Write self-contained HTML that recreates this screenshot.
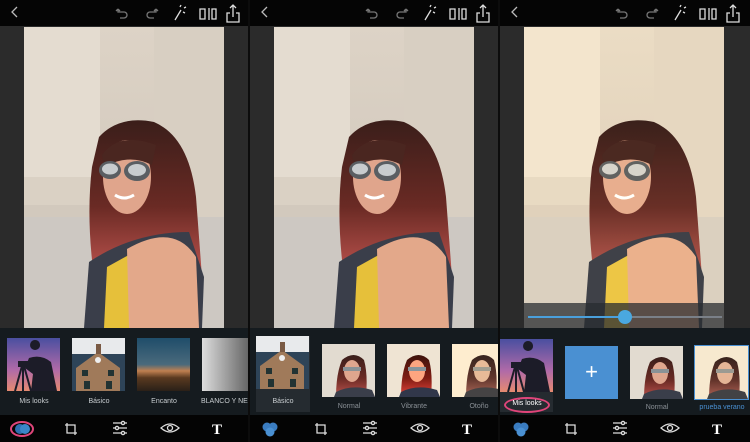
<!DOCTYPE html>
<html><head><meta charset="utf-8"><style>
body{margin:0;width:750px;height:442px;background:#0c0c0c;overflow:hidden;position:relative;font-family:"Liberation Sans",sans-serif}
.p{position:absolute;top:0;width:248px;height:442px;background:#2b2b2b;overflow:hidden}
.top{position:absolute;left:0;top:0;width:100%;height:26px;background:#050505}
.strip{position:absolute;left:0;top:328px;width:100%;height:87px;background:#151b1f}
.tb{position:absolute;left:0;top:415px;width:100%;height:27px;background:#040404}
.ph{position:absolute;left:24px;top:27px;width:200px;height:301px}
.th{position:absolute;width:53px;height:53px;overflow:hidden}
.lb{position:absolute;font-size:7px;color:#c8cdd0;text-align:center;width:60px}
svg{display:block}
</style></head><body>
<svg width="0" height="0" style="position:absolute">
<defs>
<linearGradient id="bg" x1="0" y1="0" x2="0" y2="1"><stop offset="0" stop-color="#ddd3c6"/><stop offset=".6" stop-color="#d2c9bd"/><stop offset="1" stop-color="#cfc8c0"/></linearGradient>
<linearGradient id="hair" x1="0" y1="0" x2="0" y2="1"><stop offset="0" stop-color="#3a1e1a"/><stop offset=".55" stop-color="#6a2a24"/><stop offset="1" stop-color="#c05550"/></linearGradient>
<symbol id="photo" viewBox="0 0 200 301">
<rect width="200" height="301" fill="url(#bg)"/>
<rect x="0" y="0" width="76" height="178" fill="#e4dcd0"/>
<rect x="0" y="150" width="76" height="28" fill="#dad1c4"/>
<rect x="130" y="0" width="70" height="230" fill="#d8cfc2"/>
<rect x="0" y="190" width="200" height="111" fill="#cdc8c2"/>
<path d="M75 110 Q95 88 130 95 Q165 110 172 170 L178 250 L70 250 Q62 190 68 140 Z" fill="url(#hair)"/>
<path d="M65 235 Q110 205 165 205 L180 250 L178 301 L60 301 Z" fill="#3a3e4a"/>
<path d="M83 240 L110 225 L113 301 L80 301 Z" fill="#e6c03a"/>
<path d="M103 222 Q150 195 172 230 L175 301 L105 301 Z" fill="#e3a88a"/>
<ellipse cx="103" cy="150" rx="24" ry="37" fill="#e0a58c"/>
<path d="M78 128 Q95 104 132 118 L128 138 Q105 126 80 140 Z" fill="#4a2620"/>
<ellipse cx="86" cy="143" rx="11" ry="9" fill="#5a5e62"/>
<ellipse cx="113" cy="144" rx="13" ry="10" fill="#5a5e62"/>
<ellipse cx="86" cy="142" rx="8" ry="5.5" fill="#c8ccce"/>
<ellipse cx="113" cy="143" rx="9" ry="6" fill="#c8ccce"/>
<path d="M91 168 Q100 174 110 168" stroke="#fff" stroke-width="3" fill="none"/>
</symbol>
<symbol id="mis" viewBox="0 0 53 53">
<linearGradient id="sky" x1="0" y1="0" x2="0" y2="1"><stop offset="0" stop-color="#4a4fa0"/><stop offset=".6" stop-color="#b06aa8"/><stop offset="1" stop-color="#e68a70"/></linearGradient>
<rect width="53" height="53" fill="url(#sky)"/>
<path d="M28 12 a5 5 0 1 1 0.1 0 M22 20 Q34 16 44 24 L50 53 L24 53 L26 36 L18 30 Z" fill="#1c1c28"/>
<path d="M12 24 h8 v4 h-8z M15 28 L8 53 M16 28 L16 53 M17 28 L24 53" stroke="#1c1c28" stroke-width="2" fill="#1c1c28"/>
</symbol>
<symbol id="house" viewBox="0 0 53 53">
<rect width="53" height="53" fill="#e8eaec"/>
<rect y="16" width="53" height="37" fill="#2e4458"/>
<path d="M4 53 V30 L26 14 L48 30 V53 Z" fill="#a07a5a"/>
<rect x="24" y="6" width="5" height="10" fill="#7a5a44"/>
<circle cx="26" cy="22" r="3" fill="#eee"/>
<rect x="10" y="32" width="6" height="6" fill="#233"/><rect x="36" y="32" width="6" height="6" fill="#233"/>
<rect x="12" y="43" width="6" height="8" fill="#233"/><rect x="34" y="43" width="6" height="8" fill="#233"/>
</symbol>
<symbol id="wthumb" viewBox="0 0 53 53">
<rect width="53" height="53" fill="#e2dbd0"/>
<path d="M20 16 Q32 6 42 16 Q46 30 44 53 L14 53 Q14 30 20 16Z" fill="url(#hair)"/>
<ellipse cx="30" cy="27" rx="8" ry="11" fill="#dfa68e"/>
<rect x="21" y="23" width="18" height="4" fill="#8a9296"/>
<path d="M14 48 Q30 40 50 46 L53 53 L12 53Z" fill="#3a3e4a"/>
</symbol>
</defs></svg>

<!-- PANEL 1 -->
<div class="p" style="left:0">
<div class="top"></div>
<div class="ph"><svg width="200" height="301"><use href="#photo"/></svg></div>
<div class="strip"></div>
<div class="th" style="left:7px;top:338px"><svg width="53" height="53"><use href="#mis"/></svg></div>
<div class="th" style="left:72px;top:338px"><svg width="53" height="53"><use href="#house"/></svg></div>
<div class="th" style="left:137px;top:338px;background:linear-gradient(#1f4d6a,#4a6a7c 50%,#c08050 62%,#5a3a20 75%,#2a2018)"></div>
<div class="th" style="left:202px;top:338px;background:linear-gradient(90deg,#ddd,#999 50%,#555)"></div>
<div class="lb" style="left:4px;top:398px">Mis looks</div>
<div class="lb" style="left:69px;top:398px">Básico</div>
<div class="lb" style="left:134px;top:398px">Encanto</div>
<div class="lb" style="left:201px;top:398px;text-align:left;white-space:nowrap">BLANCO Y NEGR</div>
<div class="tb"></div>
</div>
<!-- PANEL 2 -->
<div class="p" style="left:250px">
<div class="top"></div>
<div class="ph"><svg width="200" height="301"><use href="#photo"/></svg></div>
<div class="strip"></div>
<div style="position:absolute;left:6px;top:336px;width:54px;height:76px;background:#252b30"></div>
<div class="th" style="left:6px;top:336px"><svg width="53" height="53"><use href="#house"/></svg></div>
<div class="th" style="left:72px;top:344px"><svg width="53" height="53"><use href="#wthumb"/></svg></div>
<div class="th" style="left:137px;top:344px;filter:saturate(1.4) contrast(1.1)"><svg width="53" height="53"><use href="#wthumb"/></svg></div>
<div class="th" style="left:202px;top:344px;filter:sepia(.4)"><svg width="53" height="53"><use href="#wthumb"/></svg></div>
<div class="lb" style="left:3px;top:398px">Básico</div>
<div class="lb" style="left:69px;top:403px;color:#8a9096">Normal</div>
<div class="lb" style="left:134px;top:403px;color:#8a9096">Vibrante</div>
<div class="lb" style="left:199px;top:403px;color:#8a9096">Otoño</div>
<div class="tb"></div>
</div>
<!-- PANEL 3 -->
<div class="p" style="left:500px;width:250px">
<div class="top"></div>
<div class="ph" style="filter:sepia(.2) saturate(1.1)"><svg width="200" height="301"><use href="#photo"/></svg></div>
<div style="position:absolute;left:24px;top:303px;width:200px;height:25px;background:rgba(40,44,48,.75)"></div>
<div style="position:absolute;left:28px;top:316px;width:194px;height:2px;background:#7a8088"></div>
<div style="position:absolute;left:28px;top:316px;width:97px;height:2px;background:#4aa0dc"></div>
<div style="position:absolute;left:118px;top:310px;width:14px;height:14px;border-radius:50%;background:#4aa8e0"></div>
<div class="strip"></div>
<div style="position:absolute;left:0;top:339px;width:53px;height:73px;background:#252b30"></div>
<div class="th" style="left:0;top:339px"><svg width="53" height="53"><use href="#mis"/></svg></div>
<div class="th" style="left:65px;top:346px;background:#4a90d2;color:#fff;font-size:22px;text-align:center;line-height:51px">+</div>
<div class="th" style="left:130px;top:346px"><svg width="53" height="53"><use href="#wthumb"/></svg></div>
<div style="position:absolute;left:194px;top:345px;width:53px;height:53px;border:1px solid #4a90d2"></div>
<div class="th" style="left:195px;top:346px;filter:sepia(.3)"><svg width="53" height="53"><use href="#wthumb"/></svg></div>
<div style="position:absolute;left:4px;top:397px;width:42px;height:12px;border:2px solid #e0457a;border-radius:50%"></div>
<div class="lb" style="left:-3px;top:400px;color:#fff">Mis looks</div>
<div class="lb" style="left:127px;top:404px;color:#8a9096">Normal</div>
<div class="lb" style="left:192px;top:404px;color:#4a90d2">prueba verano</div>
<div class="tb"></div>
</div>

<!-- icons -->
<svg style="position:absolute;left:0;top:0" width="750" height="442">
<g stroke="#bbb" stroke-width="1.3" fill="none">
<g id="ticons">
<path d="M17 7 L12 12 L17 17"/>
<path d="M118 9 v3 h6 a3 3 0 0 1 0 6 h-4 M118 9 l-2 2 M118 9 l2 2" stroke="#777"/>
<path d="M156 9 v3 h-6 a3 3 0 0 0 0 6 h4 M156 9 l-2 2 M156 9 l2 2" stroke="#777"/>
<path d="M175 20 l6 -10 M180 7 l1 -2 M184 8 l2 -1 M183 12 l2 1" stroke="#ddd"/>
<path d="M200 9 h5 v10 h-5z M209 8 v12 M212 9 h4 v10 h-4z" stroke="#ddd"/>
<path d="M230 13 h-3 v9 h12 v-9 h-3 M233 17 V5 M230 8 l3 -3 l3 3" stroke="#ddd"/>
</g>
<use href="#ticons" x="250"/>
<use href="#ticons" x="500"/>
<g id="bicons">
<path d="M67 423 v10 h10 M65 425 h10 v10" stroke="#ddd"/>
<path d="M113 423 h14 M113 428 h14 M113 433 h14" stroke="#ddd"/>
<circle cx="123" cy="423" r="1.6" fill="#151515" stroke="#ddd"/><circle cx="117" cy="428" r="1.6" fill="#151515" stroke="#ddd"/><circle cx="123" cy="433" r="1.6" fill="#151515" stroke="#ddd"/>
<path d="M161 428 Q170 420 179 428 Q170 436 161 428Z" stroke="#ddd"/>
<circle cx="170" cy="428" r="2.5" stroke="#ddd"/>
</g>
<use href="#bicons" x="250"/>
<use href="#bicons" x="500"/>
</g>
<g fill="#2f6eb0"><circle cx="20" cy="429" r="5"/><circle cx="25" cy="429" r="5" fill="#3a86c8"/></g>
<ellipse cx="22" cy="429" rx="11" ry="7" stroke="#e0457a" stroke-width="2" fill="none"/>
<g fill="#3a7cc0"><circle cx="267" cy="427" r="4.5"/><circle cx="273" cy="427" r="4.5"/><circle cx="270" cy="432" r="4.5" fill="#4a90d2"/></g>
<g fill="#3a7cc0"><circle cx="518" cy="427" r="4.5"/><circle cx="524" cy="427" r="4.5"/><circle cx="521" cy="432" r="4.5" fill="#4a90d2"/></g>
<g fill="#fff" font-family="Liberation Serif,serif" font-weight="bold" font-size="15">
<text x="212" y="434">T</text><text x="462" y="434">T</text><text x="712" y="434">T</text></g>
</svg>
</body></html>
